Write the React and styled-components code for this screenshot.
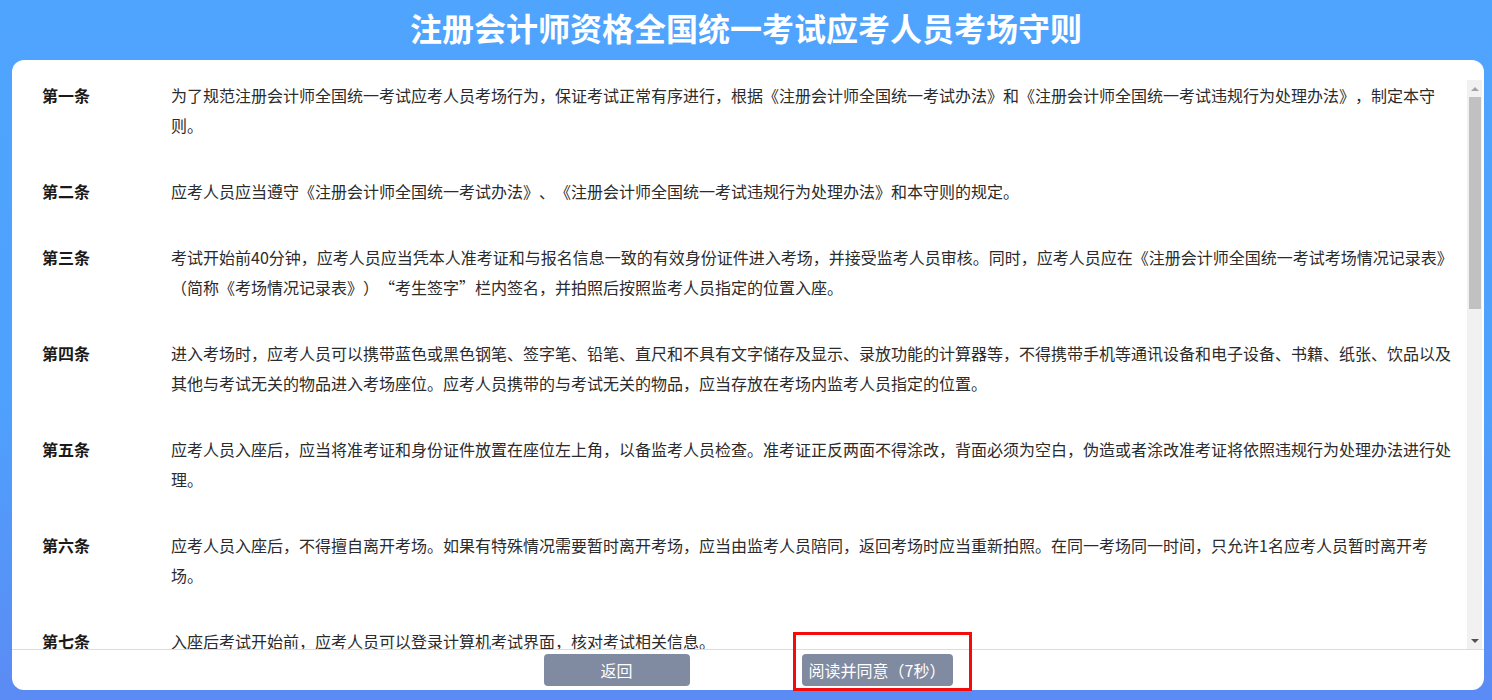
import styled, { createGlobalStyle } from 'styled-components';

const GlobalStyle = createGlobalStyle`
  html, body {
    margin: 0;
    padding: 0;
  }
  body {
    font-family: "Noto Sans CJK SC", "Noto Sans", sans-serif;
    text-spacing-trim: space-all;
  }
`;

const Page = styled.div`
  width: 1492px;
  height: 700px;
  display: flex;
  flex-direction: column;
  overflow: hidden;
  background: linear-gradient(180deg, #4fa4fe 0%, #4ea2fd 55%, #5b8bf4 100%);
`;

const Title = styled.h1`
  margin: 0;
  height: 60px;
  padding-bottom: 6px;
  box-sizing: border-box;
  display: flex;
  align-items: center;
  justify-content: center;
  color: #fff;
  font-size: 32px;
  font-weight: 700;
`;

const Card = styled.div`
  flex: 1;
  margin: 0 8px 10px 12px;
  background: #fff;
  border-radius: 12px;
  padding-top: 20px;
  display: flex;
  flex-direction: column;
`;

const ScrollArea = styled.div`
  height: 569px;
  display: flex;
  border-bottom: 1px solid #dcdcdc;
`;

const Content = styled.div`
  flex: 1;
  overflow: hidden;
  padding: 0 11px 0 30px;
`;

const Row = styled.div`
  display: grid;
  grid-template-columns: 129px 1fr;
  margin-bottom: 36px;
  font-size: 16px;
  line-height: 30px;
  text-spacing-trim: space-all;
`;

const Label = styled.div`
  font-weight: 700;
  color: #1a1a1a;
`;

const Text = styled.div`
  color: #2b2b2b;
`;

const Scrollbar = styled.div`
  width: 15px;
  margin-right: 2px;
  background: #f1f1f1;
  display: flex;
  flex-direction: column;
`;

const Arrow = styled.div`
  height: 17px;
  display: flex;
  align-items: center;
  justify-content: center;
  &::before {
    content: "";
    width: 0;
    height: 0;
    border-left: 4px solid transparent;
    border-right: 4px solid transparent;
    ${(p) =>
      p.$down
        ? `border-top: 4px solid #505050;`
        : `border-bottom: 4px solid #a3a3a3;`}
  }
`;

const Track = styled.div`
  flex: 1;
  padding: 0 1px 0 2px;
`;

const Thumb = styled.div`
  height: 212px;
  background: #c1c1c1;
`;

const Footer = styled.div`
  flex: 1;
  display: flex;
  align-items: center;
  justify-content: center;
  gap: 112px;
`;

const Button = styled.button`
  height: 32px;
  width: ${(p) => p.$w}px;
  border: none;
  border-radius: 4px;
  background: #808aa1;
  color: #fff;
  font-family: inherit;
  font-size: 16px;
  padding: 0;
  cursor: pointer;
  text-spacing-trim: space-all;
`;

const Highlight = styled.div`
  border: 3px solid #f20c0c;
  padding: 19px 16px 2px 6px;
  margin: -22px -19px -5px -9px;
`;

const rules = [
  ['第一条', '为了规范注册会计师全国统一考试应考人员考场行为，保证考试正常有序进行，根据《注册会计师全国统一考试办法》和《注册会计师全国统一考试违规行为处理办法》，制定本守则。'],
  ['第二条', '应考人员应当遵守《注册会计师全国统一考试办法》、《注册会计师全国统一考试违规行为处理办法》和本守则的规定。'],
  ['第三条', '考试开始前40分钟，应考人员应当凭本人准考证和与报名信息一致的有效身份证件进入考场，并接受监考人员审核。同时，应考人员应在《注册会计师全国统一考试考场情况记录表》（简称《考场情况记录表》）“考生签字”栏内签名，并拍照后按照监考人员指定的位置入座。'],
  ['第四条', '进入考场时，应考人员可以携带蓝色或黑色钢笔、签字笔、铅笔、直尺和不具有文字储存及显示、录放功能的计算器等，不得携带手机等通讯设备和电子设备、书籍、纸张、饮品以及其他与考试无关的物品进入考场座位。应考人员携带的与考试无关的物品，应当存放在考场内监考人员指定的位置。'],
  ['第五条', '应考人员入座后，应当将准考证和身份证件放置在座位左上角，以备监考人员检查。准考证正反两面不得涂改，背面必须为空白，伪造或者涂改准考证将依照违规行为处理办法进行处理。'],
  ['第六条', '应考人员入座后，不得擅自离开考场。如果有特殊情况需要暂时离开考场，应当由监考人员陪同，返回考场时应当重新拍照。在同一考场同一时间，只允许1名应考人员暂时离开考场。'],
  ['第七条', '入座后考试开始前，应考人员可以登录计算机考试界面，核对考试相关信息。'],
];

export default function App() {
  return (
    <Page lang="zh-CN">
      <GlobalStyle />
      <Title>注册会计师资格全国统一考试应考人员考场守则</Title>
      <Card>
        <ScrollArea>
          <Content>
            {rules.map(([label, text]) => (
              <Row key={label}>
                <Label>{label}</Label>
                <Text>{text}</Text>
              </Row>
            ))}
          </Content>
          <Scrollbar>
            <Arrow />
            <Track>
              <Thumb />
            </Track>
            <Arrow $down />
          </Scrollbar>
        </ScrollArea>
        <Footer>
          <Button $w={146}>返回</Button>
          <Highlight>
            <Button $w={151}>阅读并同意（7秒）</Button>
          </Highlight>
        </Footer>
      </Card>
    </Page>
  );
}
